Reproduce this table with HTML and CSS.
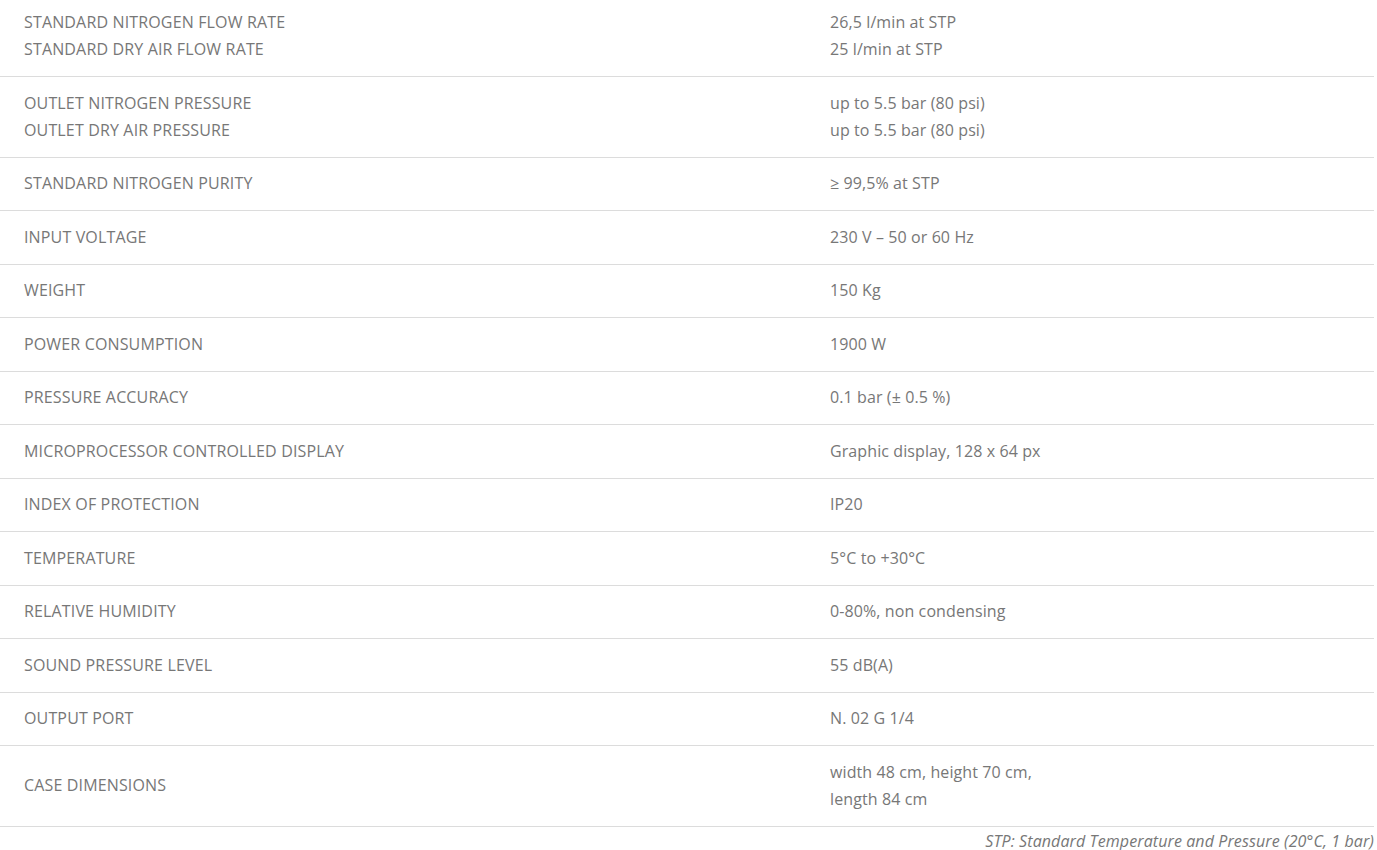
FILE: index.html
```html
<!DOCTYPE html>
<html>
<head>
<meta charset="utf-8">
<link rel="stylesheet" href="styles.css">
</head>
<body>
<div class="specs">
  <table class="spec-table">
    <tbody>
      <tr><td class="label">STANDARD NITROGEN FLOW RATE<br>STANDARD DRY AIR FLOW RATE</td><td class="value">26,5 l/min at STP<br>25 l/min at STP</td></tr>
      <tr><td class="label">OUTLET NITROGEN PRESSURE<br>OUTLET DRY AIR PRESSURE</td><td class="value">up to 5.5 bar (80 psi)<br>up to 5.5 bar (80 psi)</td></tr>
      <tr><td class="label">STANDARD NITROGEN PURITY</td><td class="value">≥ 99,5% at STP</td></tr>
      <tr><td class="label">INPUT VOLTAGE</td><td class="value">230 V – 50 or 60 Hz</td></tr>
      <tr><td class="label">WEIGHT</td><td class="value">150 Kg</td></tr>
      <tr><td class="label">POWER CONSUMPTION</td><td class="value">1900 W</td></tr>
      <tr><td class="label">PRESSURE ACCURACY</td><td class="value">0.1 bar (± 0.5 %)</td></tr>
      <tr><td class="label">MICROPROCESSOR CONTROLLED DISPLAY</td><td class="value">Graphic display, 128 x 64 px</td></tr>
      <tr><td class="label">INDEX OF PROTECTION</td><td class="value">IP20</td></tr>
      <tr><td class="label">TEMPERATURE</td><td class="value">5°C to +30°C</td></tr>
      <tr><td class="label">RELATIVE HUMIDITY</td><td class="value">0-80%, non condensing</td></tr>
      <tr><td class="label">SOUND PRESSURE LEVEL</td><td class="value">55 dB(A)</td></tr>
      <tr><td class="label">OUTPUT PORT</td><td class="value">N. 02 G 1/4</td></tr>
      <tr><td class="label">CASE DIMENSIONS</td><td class="value">width 48 cm, height 70 cm,<br>length 84 cm</td></tr>
    </tbody>
  </table>
  <p class="note">STP: Standard Temperature and Pressure (20°C, 1 bar)</p>
</div>
</body>
</html>
```

FILE: styles.css
```css
html, body {
  margin: 0;
  padding: 0;
  background: #fff;
}
body {
  font-family: "Open Sans", "Liberation Sans", sans-serif;
  font-size: 16px;
  color: #777;
  letter-spacing: 0.1px;
}
.specs {
  width: 1374px;
  margin-top: -3.7px;
}
.spec-table {
  width: 100%;
  border-collapse: collapse;
}
.spec-table td {
  padding: 12.65px 0 12.65px 24px;
  line-height: 27.2px;
  vertical-align: middle;
  border-bottom: 1px solid #dcdcdc;
}
.spec-table td.label {
  width: 782px;
  letter-spacing: 0.15px;
}
.note {
  margin: 0;
  padding-top: 3px;
  text-align: right;
  font-style: italic;
  line-height: 22px;
}
```
